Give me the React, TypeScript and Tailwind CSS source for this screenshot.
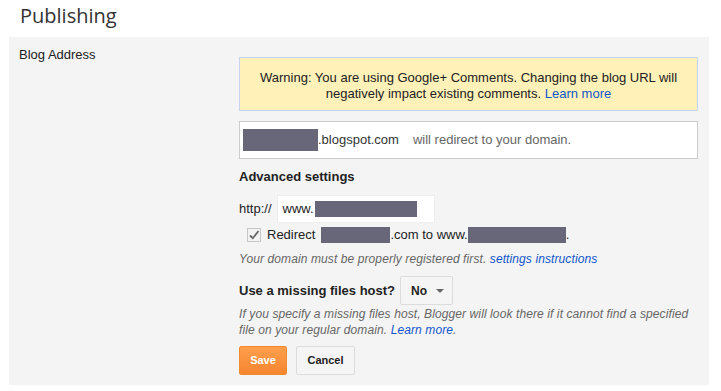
import React from "react";

const Redact = ({ w, h, className = "" }: { w: number; h: number; className?: string }) => (
  <span
    className={"inline-block bg-[#676779] align-middle " + className}
    style={{ width: w, height: h }}
  />
);

export default function App() {
  return (
    <div className="w-[721px] h-[391px] bg-white overflow-hidden text-[13px] text-[#222]" style={{ fontFamily: "Arial, 'Liberation Sans', sans-serif" }}>
      <div className="h-[37px] pl-[20px] pt-[3px]">
        <h1 className="text-[20px] leading-[26px] text-[#333]" style={{ fontFamily: "'Open Sans', sans-serif" }}>
          Publishing
        </h1>
      </div>
      <div className="ml-[9px] w-[700px] h-[348px] bg-[#f4f4f4] flex">
        <div className="w-[230px] pl-[10px] pt-[10px] leading-[16px]">Blog Address</div>
        <div className="w-[459px] pt-[20px] flex flex-col">
          <div className="h-[54px] bg-[#fff1b8] border border-[#c8d3ee] flex items-center justify-center text-center leading-[16px] px-2 pt-[3px]">
            <div>
              Warning: You are using Google+ Comments. Changing the blog URL will
              <br />
              negatively impact existing comments. <span className="text-[#1155cc]">Learn more</span>
            </div>
          </div>
          <div className="mt-[10px] h-[38px] bg-white border border-[#cccccc] flex items-center pl-[3px]">
            <Redact w={75} h={22} />
            <span className="text-[#333]">.blogspot.com</span>
            <span className="ml-[14px] text-[#666]">will redirect to your domain.</span>
          </div>
          <div className="mt-[10px] font-bold leading-[16px]">Advanced settings</div>
          <div className="mt-[10px] flex items-center">
            <span>http://</span>
            <div className="ml-[5px] w-[158px] h-[28px] bg-white border border-[#eeeeee] flex items-center pl-[5px]">
              <span>www.</span>
              <Redact w={102} h={16} className="ml-[1px]" />
            </div>
          </div>
          <div className="mt-[3px] flex items-center h-[17px]">
            <span className="ml-[8px] w-[14px] h-[14px] border border-[#c6c6c6] bg-[#f2f2f2] flex items-center justify-center">
              <svg width="12" height="12" viewBox="0 0 12 12">
                <path d="M2 6.5 L4.8 9.2 L10.5 2" fill="none" stroke="#666" strokeWidth="1.8" />
              </svg>
            </span>
            <span className="ml-[6px]">Redirect</span>
            <Redact w={69} h={16} className="ml-[6px]" />
            <span>.com to www.</span>
            <Redact w={98} h={16} />
            <span>.</span>
          </div>
          <div className="mt-[8px] italic text-[#666] leading-[16px] text-[12px] tracking-[0.1px]">
            Your domain must be properly registered first. <span className="text-[#1155cc]">settings instructions</span>
          </div>
          <div className="mt-[9px] flex items-center">
            <span className="font-bold">Use a missing files host?</span>
            <div className="ml-[5px] w-[53px] h-[29px] border border-[#dcdcdc] bg-[#f5f5f5] rounded-[2px] flex items-center pl-[10px] text-[12px] font-bold text-[#222]">
              No
              <svg className="ml-[9px]" width="8" height="4" viewBox="0 0 8 4">
                <path d="M0 0 L8 0 L4 4 Z" fill="#666" />
              </svg>
            </div>
          </div>
          <div className="mt-[1px] italic text-[#666] leading-[16px] text-[12px] tracking-[0.1px]">
            If you specify a missing files host, Blogger will look there if it cannot find a specified
            <br />
            file on your regular domain. <span className="text-[#1155cc]">Learn more</span>.
          </div>
          <div className="mt-[8px] flex">
            <button className="w-[48px] h-[29px] rounded-[2px] border border-[#f08a30] bg-gradient-to-b from-[#fe9f4c] to-[#f7852f] text-white font-bold text-[11px]">
              Save
            </button>
            <button className="ml-[9px] w-[59px] h-[29px] rounded-[2px] border border-[#dcdcdc] bg-[#f5f5f5] text-[#222] font-bold text-[11px]">
              Cancel
            </button>
          </div>
        </div>
      </div>
    </div>
  );
}
